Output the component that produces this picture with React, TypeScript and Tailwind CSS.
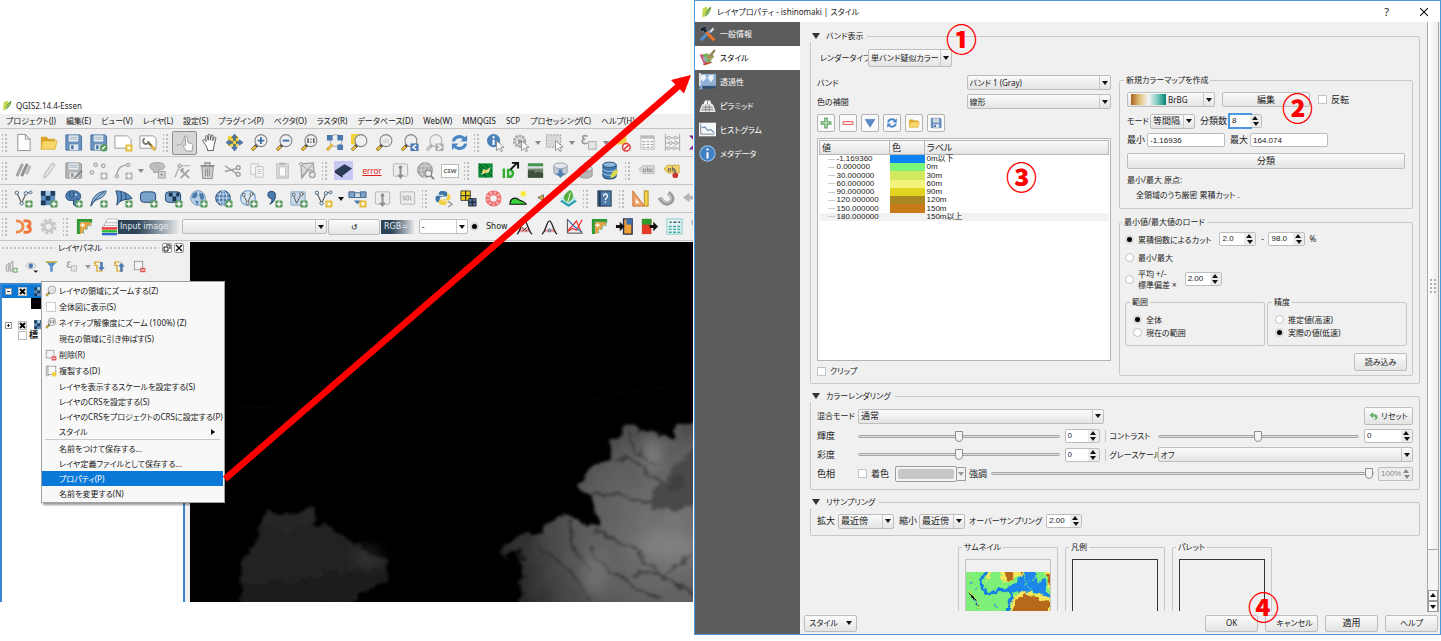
import React from "react";

type Kids = { children?: React.ReactNode };

/* ---------- shared icon pieces (20 x 20 grid) ---------- */

const Svg = ({ children, className = "h-5 w-5" }: Kids & { className?: string }) => (
  <svg viewBox="0 0 20 20" className={`shrink-0 ${className}`} fill="none" aria-hidden="true">
    {children}
  </svg>
);

const Plus = ({ c = "#5b9a5f" }: { c?: string }) => (
  <g>
    <rect x="12" y="12" width="7.5" height="7.5" rx="1.2" fill={c} />
    <path d="M15.75 13.2v5M13.2 15.75h5" stroke="#fff" strokeWidth="1.5" />
  </g>
);

const Star = () => (
  <g>
    <rect x="12" y="12" width="7.5" height="7.5" rx="1.2" fill="#e3b92d" />
    <path d="M15.75 13.2v5M13.2 15.75h5M14 14l3.5 3.5M17.500 14L14 17.500" stroke="#fff" strokeWidth="0.9" />
  </g>
);

const Lens = ({ children, grey }: Kids & { grey?: boolean }) => (
  <g>
    <path d="M7.500 12.500L2 18" stroke={grey ? "#a8a8a8" : "#3c3c3c"} strokeWidth="3.200" />
    <path d="M6 14L2 18" stroke={grey ? "#c8c8c8" : "#e9b93a"} strokeWidth="2.600" />
    <circle cx="11.500" cy="8" r="6.300" fill="#eef0f0" stroke={grey ? "#b4b4b4" : "#858585"} strokeWidth="1.200" />
    {children}
  </g>
);

const Floppy = ({ c = "#6c93c0", d = "#47709e" }: { c?: string; d?: string }) => (
  <g>
    <path d="M2 2h15l1.500 1.500V18H2z" fill={c} stroke={d} />
    <rect x="5" y="2.500" width="10" height="6.500" fill="#e8edf2" />
    <path d="M6 4.500h8M6 6.500h8" stroke="#9fb0c0" />
    <rect x="6" y="12" width="9" height="6" fill="#dfe6ec" />
    <rect x="7.500" y="13" width="2.500" height="4" fill={d} />
  </g>
);

const Checker = () => (
  <g>
    <rect x="2" y="2" width="15" height="15" fill="#5f8fc0" />
    <path d="M2 2h5v5H2zM12 2h5v5h-5zM7 7h5v5H7zM2 12h5v5H2z" fill="#1f3c5c" />
    <path d="M7 2h5v5H7z" fill="#a8c8e8" />
  </g>
);

const Nodes = ({ c = "#4a6a8a" }: { c?: string }) => (
  <g>
    <path d="M3 4l5 11L13 4l4 0" stroke="#555" strokeWidth="1.100" />
    <circle cx="3" cy="4" r="1.800" fill="#e8e8e8" stroke={c} />
    <circle cx="8" cy="15" r="1.800" fill="#e8e8e8" stroke={c} />
    <circle cx="12.500" cy="4.500" r="1.800" fill="#e8e8e8" stroke={c} />
    <circle cx="17.500" cy="3.500" r="1.500" fill="#e8e8e8" stroke={c} />
  </g>
);

const Globe = ({ c = "#4f7fae", l = "#dbe8f4", s = "#2f557c" }: { c?: string; l?: string; s?: string }) => (
  <g>
    <circle cx="9.500" cy="9.500" r="7.800" fill={c} stroke={s} />
    <path d="M1.700 9.500h15.600M9.500 1.700v15.600M3.500 5.300h12M3.500 13.700h12" stroke={l} strokeWidth="0.900" />
    <ellipse cx="9.500" cy="9.500" rx="4" ry="7.800" stroke={l} strokeWidth="0.900" />
  </g>
);

const Refresh = ({ c = "#4a86c4" }: { c?: string }) => (
  <g fill={c}>
    <path d="M2 9C2.500 4.500 6 2.200 10 2.200c2.300 0 4.200.8 5.600 2.200L18 2.200V9h-7l2.400-2.300C12.500 5.800 11.400 5.400 10 5.400 7.600 5.400 5.800 6.800 5.300 9z" />
    <path d="M18 11c-.5 4.500-4 6.800-8 6.800-2.300 0-4.200-.8-5.600-2.200L2 17.800V11h7l-2.400 2.300c.9.900 2 1.300 3.400 1.300 2.400 0 4.200-1.400 4.700-3.600z" />
  </g>
);

const Pointer = ({ c = "#fff" }: { c?: string }) => (
  <path d="M11 8l8 7-3.500.4 1.900 3.300-1.600.9-1.900-3.400L11 18.500z" fill={c} stroke="#777" strokeWidth="0.800" />
);

const Folder = () => (
  <g>
    <path d="M2 4h6l1.500 2H17v11H2z" fill="#d9a62b" />
    <path d="M4 8.500h15L17 17H2z" fill="#f8d76a" stroke="#d9a62b" strokeWidth="0.700" />
  </g>
);

const Box = ({ children }: Kids) => (
  <g>
    <rect x="2.500" y="3" width="15" height="13" rx="1" fill="#ececec" stroke="#b4b4b4" />
    {children}
  </g>
);

const GeoTiles = () => (
  <g>
    <path d="M2 2h16v4H6v12H2z" fill="#2e9a2e" />
    <path d="M5 5h12v4h-4v4H9v4H5z" fill="#e8a33a" />
    <path d="M5 5h12M5 5v12M9 17v-4h4V9h4V5" stroke="#3aa" strokeDasharray="1.500 1.500" />
    <path d="M8 6v5M5.500 8.500h5" stroke="#fff" strokeWidth="1.200" />
  </g>
);

const icons: Record<string, React.ReactNode> = {
  logo: (
    <g>
      <path d="M3 4l7-3 1 6-4 11-5 1z" fill="#c6d64a" />
      <path d="M17 1C12 4 8 9 6 16l2 1C13 13 17 8 17 1z" fill="#5d9b2f" />
      <path d="M4 19L14 6" stroke="#fff" />
    </g>
  ),
  newFile: <path d="M4 1.500h8l5 5v12H4zM12 1.500v5h5" fill="#fff" stroke="#8e8e8e" />,
  open: <Folder />,
  save: <Floppy />,
  saveAs: (
    <g>
      <Floppy />
      <circle cx="15.500" cy="15.500" r="4" fill="#5b9a5f" />
      <path d="M13.800 17.200l3.200-3.200" stroke="#fff" strokeWidth="1.400" />
    </g>
  ),
  newPage: (
    <g>
      <path d="M1 3h13l4 4v9H1z" fill="#fff" stroke="#999" />
      <Star />
    </g>
  ),
  pageTool: (
    <g>
      <path d="M1 3h14l3 3v10H1z" fill="#fff" stroke="#999" />
      <path d="M9 9l8 9" stroke="#7a6a3a" strokeWidth="2.500" />
      <path d="M13 13.500l4 4.500" stroke="#e9b93a" strokeWidth="2.500" />
      <path d="M6 5.500a3.200 3.200 0 104.500 4" stroke="#777" strokeWidth="2" />
    </g>
  ),
  touch: (
    <g>
      <path d="M11 12V5.500c0-2 2.500-2 2.500 0V10l4 1.200c1 .3 1.500 1 1.300 2L18 19h-6l-3.500-5c0-1.500 1.300-1.800 2.500-.500z" fill="#fff" stroke="#999" />
      <path d="M2 13l5-1.500L9 7l2-5" stroke="#888" strokeDasharray="2 1.200" />
    </g>
  ),
  hand: (
    <path
      d="M5.500 12L3 8.500c-.8-1.300.8-2.200 1.700-1.200L6.500 9 6 3.800c-.1-1.500 1.800-1.600 2-.2l.7 4V2.500c0-1.500 2-1.500 2.100 0l.2 5 .8-4.400c.3-1.400 2.100-1.200 2 .2L13.400 8l1.500-3c.6-1.200 2.200-.6 1.800.7L15 12c-.2 3-1 4-1 6.500H8c0-2.500-1.200-4-2.500-6.500z"
      fill="#fff"
      stroke="#555"
    />
  ),
  panAll: (
    <g>
      <rect x="3" y="3" width="11" height="11" fill="#f3d33d" />
      <path d="M10 1l3 4h-2v3h-2V5H7zM10 19l-3-4h2v-3h2v3h2zM1 10l4-3v2h3v2H5v2zM19 10l-4 3v-2h-3V9h3V7z" fill="#4a7ab0" stroke="#2f557c" strokeWidth="0.600" />
    </g>
  ),
  zoomIn: <Lens><path d="M11.500 4.500v7M8 8h7" stroke="#3f6fa5" strokeWidth="2" /></Lens>,
  zoomOut: <Lens><path d="M8 8h7" stroke="#3f6fa5" strokeWidth="2" /></Lens>,
  zoom1: <Lens><path d="M8.500 5.500v5M14.500 5.500v5M11.500 6v1.200M11.500 9v1.200" stroke="#444" strokeWidth="1.400" /></Lens>,
  zoomFull: (
    <g>
      <Lens grey />
      <path d="M2 2h6v6H2zM13 2h6v6h-6zM13 12h6v6h-6z" fill="#4a7ab0" />
      <path d="M2 18l6-6" stroke="#e9b93a" strokeWidth="2.500" />
    </g>
  ),
  zoomSel: (
    <g>
      <rect x="1" y="1" width="11" height="11" fill="#f3d33d" />
      <Lens />
    </g>
  ),
  zoomLayer: <Lens><path d="M8 6h7v5H8z" fill="#dcdcdc" /></Lens>,
  zoomPrev: (
    <g>
      <Lens />
      <rect x="11" y="11" width="8.500" height="8" fill="#4a7ab0" />
      <path d="M17 12.500L13.500 15l3.500 2.500" stroke="#fff" strokeWidth="1.500" />
    </g>
  ),
  zoomNext: (
    <g>
      <Lens grey />
      <rect x="11" y="11" width="8.500" height="8" fill="#b0b0b0" />
      <path d="M13.500 12.500L17 15l-3.500 2.500" stroke="#fff" strokeWidth="1.500" />
    </g>
  ),
  refresh: <Refresh />,
  identify: (
    <g>
      <circle cx="8" cy="8" r="7" fill="#4a80ba" />
      <path d="M8 7v5.500M8 3.500v2" stroke="#fff" strokeWidth="2.200" />
      <Pointer />
    </g>
  ),
  action: (
    <g>
      <circle cx="9" cy="8.500" r="5.500" fill="#ddd" stroke="#aaa" strokeWidth="3" strokeDasharray="2.500 1" />
      <path d="M7.500 6l5 3-5 3z" fill="#999" />
      <Pointer />
    </g>
  ),
  select: (
    <g>
      <rect x="1.500" y="2" width="15" height="13" fill="#d8d8d8" stroke="#999" strokeDasharray="2 1.500" />
      <Pointer />
    </g>
  ),
  epsilon: (
    <g>
      <path d="M9 3.500C5 1.500 2 4 5.500 6.500 1.500 8 3 12.500 9 10.500" stroke="#999" strokeWidth="1.800" />
      <rect x="10" y="9" width="8" height="8" fill="#e4e4e4" stroke="#aaa" />
    </g>
  ),
  deselect: (
    <g>
      <rect x="3" y="3" width="11" height="9" fill="#f3cf45" />
      <circle cx="14" cy="15" r="4" fill="#fff" stroke="#e23b3b" strokeWidth="1.600" />
      <path d="M11.500 17.500l5-5" stroke="#e23b3b" strokeWidth="1.600" />
    </g>
  ),
  tableI: (
    <g>
      <rect x="3" y="3" width="14" height="14" fill="#f8f8f8" stroke="#bbb" />
      <path d="M3 4.500h14" stroke="#bbb" strokeWidth="3" />
      <path d="M4.500 9h3M9 9h3M13.500 9h2.500M4.500 12h3M9 12h3M13.500 12h2.500M4.500 15h3M9 15h3M13.500 15h2.500" stroke="#999" />
    </g>
  ),
  abacus: (
    <g>
      <path d="M2.500 1v18M17.500 1v18M2.500 5h15M2.500 10.500h15M2.500 16h15" stroke="#a5a5a5" />
      <circle cx="6" cy="5" r="1.600" fill="#eee" stroke="#a5a5a5" />
      <circle cx="13" cy="5" r="1.600" fill="#eee" stroke="#a5a5a5" />
      <circle cx="8" cy="10.500" r="1.600" fill="#eee" stroke="#a5a5a5" />
      <circle cx="13.500" cy="10.500" r="1.600" fill="#eee" stroke="#a5a5a5" />
      <circle cx="6" cy="16" r="1.600" fill="#eee" stroke="#a5a5a5" />
      <circle cx="12" cy="16" r="1.600" fill="#eee" stroke="#a5a5a5" />
    </g>
  ),
  sigma: <path d="M15 4H4l6 6-6 6h11" stroke="#7b2a8c" strokeWidth="2.500" />,
  pencils: (
    <g stroke="#a4a4a4" strokeWidth="3">
      <path d="M3 16L9 3" />
      <path d="M8 16l6-13" stroke="#8e8e8e" />
      <path d="M13 14l4-9" stroke="#b8b8b8" />
    </g>
  ),
  pencil: <path d="M5 18l1-4.500L14 2l3 2L9 15.500z" fill="#e2e2e2" stroke="#b0b0b0" />,
  saveEdit: (
    <g>
      <Floppy c="#b4b4b4" d="#939393" />
      <path d="M11 18l8-8" stroke="#888" strokeWidth="2" />
    </g>
  ),
  addPoint: (
    <g>
      <circle cx="3" cy="12" r="2" fill="#ddd" stroke="#999" />
      <circle cx="7" cy="4" r="2" fill="#ddd" stroke="#999" />
      <circle cx="15" cy="5" r="2" fill="#ddd" stroke="#999" />
      <Plus c="#b5b5b5" />
    </g>
  ),
  addCurve: (
    <g>
      <path d="M3 17c0-8 3-13 12-13" stroke="#a5a5a5" strokeWidth="1.400" />
      <circle cx="3" cy="16" r="1.800" fill="#ddd" stroke="#999" />
      <circle cx="15" cy="4" r="1.800" fill="#ddd" stroke="#999" />
      <Plus c="#b5b5b5" />
    </g>
  ),
  addShape: (
    <g>
      <path d="M3 3c3-2 12-2 14 1s-1 5-4 5h-2l1 3H6L5 9C2 9 1 5 3 3z" fill="#bdbdbd" stroke="#a2a2a2" />
      <path d="M11 11h7v7h-7z" fill="#ddd" stroke="#999" />
      <path d="M14.500 12.500v4M12.500 14.500h4" stroke="#999" />
    </g>
  ),
  nodeTool: (
    <g>
      <path d="M2 17L7 5h11" stroke="#aaa" strokeWidth="1.300" />
      <circle cx="7" cy="5" r="1.800" fill="#ddd" stroke="#999" />
      <path d="M8 9l9 9M17 9l-9 9" stroke="#a5a5a5" strokeWidth="2" />
      <path d="M8 11l3-3" stroke="#a5a5a5" strokeWidth="3" />
    </g>
  ),
  trash: (
    <g stroke="#8c8c8c">
      <path d="M4 6h12l-1 12.500H5z" fill="#cfcfcf" />
      <path d="M2.500 5h15M7.500 4V2h5v2" strokeWidth="1.600" />
      <path d="M8 8v8M10 8v8M12 8v8" />
    </g>
  ),
  cut: (
    <g stroke="#a0a0a0" strokeWidth="1.500">
      <path d="M2 5l12 8M2 11l12-3" />
      <circle cx="16" cy="7" r="2" />
      <circle cx="16" cy="14" r="2" />
    </g>
  ),
  copy: (
    <g stroke="#c0c0c0" fill="#f6f6f6">
      <path d="M3 3h8v11H3z" />
      <path d="M8 6h8v11H8z" />
      <path d="M10 9h4M10 11h4M10 13h4" />
    </g>
  ),
  paste: (
    <g stroke="#b5b5b5">
      <rect x="4" y="3" width="12" height="15" fill="#e4e4e4" />
      <rect x="6.500" y="6" width="7" height="10" fill="#fafafa" />
      <path d="M7 3h6" strokeWidth="2.500" />
    </g>
  ),
  polyTool: (
    <g>
      <path d="M3 3l13-1 1 9-6-2-7 9z" fill="#d9d9d9" stroke="#a0a0a0" strokeWidth="1.200" />
      <circle cx="15" cy="14.500" r="3" fill="#eee" stroke="#a5a5a5" strokeWidth="1.500" />
      <circle cx="3" cy="3" r="1.500" fill="#fff" stroke="#999" />
      <path d="M3 17L16 3M4 4l10 9" stroke="#a0a0a0" />
    </g>
  ),
  chip: (
    <g>
      <rect width="20" height="20" fill="#c9c8f4" />
      <path d="M1 10l10-6.500 8 4.500-10 7.500z" fill="#2c3b55" />
      <path d="M1 10v2l8 5.500v-2z" fill="#141c2b" />
    </g>
  ),
  down: (
    <Box>
      <path d="M10 6v10" stroke="#8d8d8d" strokeWidth="2" />
      <path d="M6.500 14.500h7L10 19z" fill="#8d8d8d" />
      <circle cx="10" cy="6.500" r="1.800" fill="#8d8d8d" />
    </Box>
  ),
  globeFind: (
    <g>
      <Globe c="#a9a9a9" l="#dcdcdc" s="#8e8e8e" />
      <circle cx="13" cy="13" r="3.500" fill="#eee" stroke="#888" strokeWidth="1.300" />
      <path d="M15.500 15.500l3.500 3.500" stroke="#888" strokeWidth="2" />
    </g>
  ),
  osgreen: (
    <g>
      <rect x="2.500" y="2.500" width="15" height="15" fill="#0c8d35" />
      <path d="M3 3l14 13M3 10l8 7M9 3l8 8M3 6l8 11" stroke="#0a4d20" />
      <path d="M6 14l2-5 3 1 4-3-2 5-3 0z" fill="#f6c945" stroke="#fff" strokeWidth="0.600" />
    </g>
  ),
  idArrow: (
    <g>
      <path d="M3 8v10M7.500 9.500v7h2c4 0 4-7 0-7z" stroke="#2fae2f" strokeWidth="2.600" />
      <path d="M10 9l7-7M11.500 2H18v6" stroke="#111" strokeWidth="2" />
    </g>
  ),
  scene: (
    <g>
      <rect x="2" y="2.500" width="16" height="15" fill="#6d846d" />
      <path d="M2 4h16" stroke="#3c9a4a" strokeWidth="2.500" />
      <path d="M2 5.500h16v2.500H2z" fill="#d5dde0" />
      <path d="M2 10h7v7.500H2zM9 13l4-2 5 2v4.500H9z" fill="#3f4f3d" />
    </g>
  ),
  dbDown: (
    <g>
      <path d="M3 5v7c0 4 14 4 14 0V5" fill="#c3cbd3" stroke="#93a0ad" />
      <ellipse cx="10" cy="5" rx="7" ry="3" fill="#e3e7ec" stroke="#93a0ad" />
      <path d="M8 9h4v4h3l-5 5-5-5h3z" fill="#4f81b5" />
    </g>
  ),
  dbUp: (
    <g>
      <path d="M3 8v7c0 4 14 4 14 0V8" fill="#b8b8b8" stroke="#999" />
      <ellipse cx="10" cy="8" rx="7" ry="3" fill="#ddd" stroke="#999" />
      <path d="M8 12V6H5l5-5 5 5h-3v6z" fill="#a2a2a2" />
    </g>
  ),
  dbBlue: (
    <g>
      <path d="M2 4v12c0 4 14 4 14 0V4" fill="#3f77ae" stroke="#234c78" />
      <ellipse cx="9" cy="4" rx="7" ry="2.800" fill="#8fb8de" stroke="#234c78" />
      <path d="M2 8c0 4 14 4 14 0M2 12c0 4 14 4 14 0" stroke="#b7d2ea" />
      <path d="M10 18c0-5 3-8 8-9-1 6-3 8-8 9z" fill="#d9d94a" />
    </g>
  ),
  tagGrey: (
    <g>
      <path d="M2 9l4-4h12v8H6z" fill="#dadada" stroke="#b8b8b8" />
      <path d="M6.500 8.500h2.500v2.500H6.500zM11 6.500v4.500h2v-2.500h-2M16.500 8.500h-2v2.500h2" stroke="#888" strokeWidth="0.900" />
    </g>
  ),
  tagYellow: (
    <g>
      <path d="M2 8.500l4-4h12v8H6z" fill="#f5d569" stroke="#c9a63c" />
      <path d="M6.500 8h2.500v2.500H6.500zM11 6v4.500h2V8h-2" stroke="#555" strokeWidth="0.900" />
      <circle cx="14" cy="15" r="3" fill="#c33" />
      <path d="M14 9v4" stroke="#666" strokeWidth="1.500" />
    </g>
  ),
  vectorAdd: <g><Nodes /><Plus /></g>,
  rasterAdd: <g><Checker /><Plus /></g>,
  elephant: (
    <g>
      <path d="M3 4c2-3 10-3 13 0s1 8-1 8l-1-2-1 6c0 2-3 2-3 0v-4H6C2 12 1 7 3 4z" fill="#4c7bb0" stroke="#2a4f7a" />
      <path d="M7 3c-2 2-1 6 1 6s3-4 2-6" stroke="#2a4f7a" />
      <circle cx="12.500" cy="6" r="0.900" fill="#fff" />
      <Plus />
    </g>
  ),
  feather: (
    <g>
      <path d="M2 18C3 9 8 3 18 2c-1 6-6 8-9 9-3 1-5 3-7 7z" fill="#8eb4d8" stroke="#2f557c" />
      <path d="M2 18C6 11 10 7 16 3" stroke="#2f557c" />
      <Plus />
    </g>
  ),
  fan: (
    <g>
      <path d="M2 2c7 0 14 3 17 8l-5 1C9 11 5 13 3 17c1-6 1-10-1-15z" fill="#5f8fc0" stroke="#22466f" />
      <path d="M7 3c1 4 1 7 0 10M12 5c1 3 1 4 0 6" stroke="#22466f" />
      <Plus />
    </g>
  ),
  boxAdd: (
    <g>
      <rect x="1.500" y="3" width="16" height="11" rx="3.500" fill="#7aa3cc" stroke="#22466f" />
      <Plus />
    </g>
  ),
  boxChk: (
    <g>
      <rect x="1.500" y="3" width="16" height="11" rx="3.500" fill="#7aa3cc" stroke="#22466f" />
      <path d="M5 4h4v4H5zM13 4h3v4h-3zM9 8h4v5H9z" fill="#18304c" />
      <Plus />
    </g>
  ),
  globeAdd: (
    <g>
      <circle cx="9.500" cy="9.500" r="7.800" fill="#b3cee6" stroke="#7f9fbe" />
      <path d="M4 5l4-2 1 4-3 3-3-1zM11 4l4 1 1 5-3 2-2-4zM6 12l4 1-1 4z" fill="#4d7aa6" />
      <Plus />
    </g>
  ),
  globeGrid: <g><Globe /><Plus /></g>,
  globeVec: (
    <g>
      <circle cx="9.500" cy="9.500" r="7.800" fill="#d9e7f4" stroke="#7fa5cc" strokeWidth="1.400" />
      <path d="M4 5l5 10 4-10 3 1" stroke="#555" />
      <circle cx="5" cy="6" r="1.500" fill="#fff" stroke="#555" />
      <circle cx="9" cy="14.500" r="1.500" fill="#fff" stroke="#555" />
      <circle cx="13" cy="5.500" r="1.500" fill="#fff" stroke="#555" />
      <Plus />
    </g>
  ),
  comma: (
    <g>
      <path d="M4 6a4 4 0 118 1c0 5-3 8-6 9 2-2 3-4 2-6-2 0-4-1.500-4-4z" fill="#4a7ab0" stroke="#22466f" />
      <Plus />
    </g>
  ),
  virtualAdd: (
    <g>
      <rect x="2" y="3" width="15" height="14" rx="1" fill="#c8d9ea" stroke="#86a4c2" />
      <path d="M4 5l4 10 5-10h3" stroke="#555" />
      <circle cx="5" cy="6" r="1.500" fill="#fff" stroke="#555" />
      <circle cx="13" cy="5.500" r="1.500" fill="#fff" stroke="#555" />
      <Plus />
    </g>
  ),
  vectorNew: <g><Nodes /><Star /></g>,
  satellite: (
    <g>
      <path d="M1 3h6v6H1zM13 3h6v6h-6z" fill="#7ea3c6" stroke="#3f648b" />
      <path d="M7 4h6v5H7z" fill="#d5dde6" stroke="#3f648b" />
      <path d="M6 12h8l-4 4z" fill="#4a7ab0" />
      <Star />
    </g>
  ),
  sql: (
    <Box>
      <path d="M7 7.500H5.200v2h1.600v2H5M8.500 7.500h2.500v4H8.500zM13 7v4.500h2" stroke="#999" strokeWidth="0.800" />
    </Box>
  ),
  python: (
    <g>
      <path d="M9 2c-4 0-4 2-4 4h5v1H3c-2 0-2 7 1 7h2v-3c0-2 1-3 3-3h3c2 0 2-1 2-3 0-2-1-3-5-3z" fill="#3f76a8" />
      <path d="M10 17c4 0 4-2 4-4H9v-1h7c2 0 2-7-1-7h-1v3c0 2-1 3-3 3H8c-2 0-3 1-3 3 0 2 2 3 5 3z" fill="#f4cf48" />
      <path d="M15 13l4 3-4 3" stroke="#999" strokeWidth="1.500" />
    </g>
  ),
  tiles: (
    <g stroke="#222" strokeWidth="0.800">
      <path d="M2 2h5v5H2zM7 2h5v5H7zM2 7h5v5H2zM7 7h5v5H7z" fill="#f1cf1c" />
      <path d="M10 10h4v4h-4zM14 10h4v4h-4zM14 14h4v4h-4zM10 14h4v4h-4z" fill="#4e6da0" />
    </g>
  ),
  donut: (
    <g>
      <circle cx="10" cy="10" r="6" stroke="#ef6b6b" strokeWidth="5" />
      <circle cx="10" cy="10" r="6" stroke="#f8b3b3" strokeWidth="3" strokeDasharray="2 2" />
    </g>
  ),
  hill: (
    <g>
      <path d="M1 16c0-6 5-8 9-5 3 2 7 2 8 5z" fill="#38d338" stroke="#111" strokeWidth="1.200" />
      <circle cx="15" cy="5" r="2.500" fill="#fbe92a" />
      <path d="M15 1v8M11 5h8M12 2l6 6M18 2l-6 6" stroke="#fbe92a" strokeWidth="0.700" />
    </g>
  ),
  horn: <path d="M4 9l6-3v6z" fill="#d9b43c" stroke="#555" strokeWidth="0.800" />,
  layersLeaf: (
    <g>
      <path d="M1 13l9-5 9 5-9 6z" fill="#2d9fb5" />
      <path d="M1 10l9-5 9 5-9 6z" fill="#bfe6ea" />
      <path d="M9 14C3 11 4 5 12 1c5 5 3 11-3 13z" fill="#57ad3e" />
      <path d="M9 14L12 4" stroke="#fff" />
    </g>
  ),
  help: (
    <g>
      <rect x="3" y="2" width="14" height="16" fill="#4f7ba8" stroke="#21374f" />
      <path d="M5 2v16" stroke="#21374f" strokeWidth="2" />
      <path d="M9 7.500c0-3 4-3 4 0 0 2-2 2-2 4M11 13v1.500" stroke="#fff" strokeWidth="1.300" />
    </g>
  ),
  ruler: (
    <g>
      <path d="M2 2l12 16H2z" fill="#f3a46a" stroke="#c76a2c" />
      <path d="M5 10l4 5H5z" fill="#fff" />
      <rect x="14" y="2" width="4" height="16" fill="#f4d24c" stroke="#b18a1e" />
    </g>
  ),
  magnet: (
    <g stroke="#9b9b9b" strokeLinecap="butt">
      <path d="M4 9c2 5 7 8 11 5s2-7-2-10" strokeWidth="4.500" />
      <path d="M5 9c2 4 6 6 9 4s2-5-1-8" stroke="#c8c8c8" strokeWidth="1.500" />
    </g>
  ),
  undo: <path d="M2 9l7-5v3c6 0 9 2 9 8-2-4-5-4-9-4v3z" fill="#b5b5b5" />,
  d3: (
    <g stroke="#f0743a" strokeWidth="3">
      <path d="M2 4c10 0 10 12 0 12" stroke="#f28a4a" />
      <path d="M10 4h3.500c4.500 0 4.500 5.500 0 6 5 .5 5 6 0 6H10" />
    </g>
  ),
  gear: (
    <g>
      <circle cx="10" cy="10" r="7" stroke="#c8c8c8" strokeWidth="3" strokeDasharray="3.500 2" />
      <circle cx="10" cy="10" r="4.500" fill="#eee" stroke="#c8c8c8" strokeWidth="3" />
    </g>
  ),
  geo: <GeoTiles />,
  stack: (
    <g>
      <path d="M2 12L8 2h10v10z" fill="#f8f8f8" stroke="#888" strokeDasharray="1 1" />
      <path d="M4 9h13M6 6h12" stroke="#999" strokeDasharray="2 1" />
      <path d="M2 12h16" stroke="#e33" strokeWidth="2.500" />
      <path d="M2 15h16" stroke="#3b3" strokeWidth="2.500" />
      <path d="M2 18h16" stroke="#36c" strokeWidth="2.500" />
    </g>
  ),
  percent: (
    <g>
      <path d="M4 12h12v4H4z" fill="#f3a0a0" />
      <path d="M2 18C6 16 7 4 10 4s4 12 8 14" stroke="#222" strokeWidth="1.400" />
      <path d="M8 15l4-4M7.500 11.500h1.500M11 14.500h1.500" stroke="#222" />
    </g>
  ),
  sigmaCurve: (
    <g>
      <path d="M4 13h12v3H4z" fill="#f3a0a0" />
      <path d="M2 18C6 16 7 4 10 4s4 12 8 14" stroke="#222" strokeWidth="1.400" />
      <circle cx="10" cy="14" r="1.500" stroke="#27a" />
    </g>
  ),
  plot: (
    <g>
      <path d="M2.500 2v15H19" stroke="#444" />
      <path d="M3 15l5-3 4 2 6-11" stroke="#e22" strokeWidth="1.200" />
      <path d="M3 14L8 9l4-5 5 12" stroke="#e22" strokeWidth="1.200" />
      <path d="M3 3l8 8 7 5" stroke="#36a" strokeWidth="1.200" />
    </g>
  ),
  inBox: (
    <g>
      <path d="M9 2h9v16H9z" fill="#f2a23a" stroke="#22324d" strokeWidth="1.500" />
      <path d="M12 2h6v6h-6z" fill="#3b6fb0" />
      <path d="M1 8.500h4V5l5 5-5 5v-3.500H1z" fill="#111" />
    </g>
  ),
  outBox: (
    <g>
      <path d="M2 2h10v16H2z" fill="#e33a2a" />
      <path d="M2 2h10v6H2z" fill="#2e9a2e" />
      <path d="M10 8.500h4V5l5 5-5 5v-3.500h-4z" fill="#111" />
    </g>
  ),
  calc: (
    <g>
      <rect x="2" y="2" width="16" height="16" fill="#e2f3f2" stroke="#8cc" />
      <path d="M5 5.500h2M9 5.500h3M14 5.500h2" stroke="#456" strokeWidth="1.500" />
      <path d="M4 10h3M8.500 10h3M13 10h3M4 13h3M8.500 13h3M13 13h3M4 16h3M8.500 16h3M13 16h3" stroke="#3aa6a0" strokeWidth="1.500" />
    </g>
  ),
  wrench: (
    <g>
      <path d="M9 9l8 9" stroke="#8aa06a" strokeWidth="4" />
      <path d="M3 3c-3 5 2 9 7 7 4-3 3-8-1-9l1 5-4 2z" fill="#c8c8c8" stroke="#999" />
    </g>
  ),
  addGroup: (
    <g>
      <path d="M2 17V8l4-3v12zM8 17V5l4-3v15z" fill="#e8e8e8" stroke="#888" strokeWidth="1.200" />
      <Plus c="#7cae80" />
    </g>
  ),
  eye: (
    <g>
      <path d="M1 9c4-6 12-6 16 0-4 6-12 6-16 0z" fill="#f2f2f2" stroke="#999" />
      <circle cx="9" cy="9" r="3.500" fill="#4a7ab0" />
      <path d="M13 16h7l-3.500 3.500z" fill="#111" />
    </g>
  ),
  filter: (
    <g>
      <path d="M2 3h16l-6 7v8H8v-8z" fill="#5c92cc" />
      <path d="M1 3h18" stroke="#c9b23a" strokeWidth="2.500" />
    </g>
  ),
  expandT: (
    <g>
      <path d="M3 3h9M6 8v9h9M3 3v5h4" stroke="#d9a62b" strokeWidth="2.500" strokeDasharray="3 1" />
      <path d="M11 3h4v8h3l-5 6-5-6h3z" fill="#4a7ab0" />
    </g>
  ),
  collapseT: (
    <g>
      <path d="M3 3h9M6 8v9h9M3 3v5h4" stroke="#d9a62b" strokeWidth="2.500" strokeDasharray="3 1" />
      <path d="M11 18h4v-8h3l-5-6-5 6h3z" fill="#4a7ab0" />
    </g>
  ),
  removeL: (
    <g>
      <rect x="2" y="2" width="13" height="13" fill="#f4f4f4" stroke="#888" strokeWidth="1.200" />
      <rect x="11" y="12" width="8" height="7" rx="1" fill="#e25555" />
      <path d="M12.500 15.500h5" stroke="#fff" strokeWidth="1.600" />
    </g>
  ),
  dup: (
    <g>
      <path d="M2 2h4v16H2z" fill="#ddd" stroke="#888" />
      <rect x="5" y="2" width="13" height="14" fill="#fafafa" stroke="#888" strokeWidth="1.200" />
      <rect x="12" y="12" width="7" height="7" fill="#f1cf3c" />
    </g>
  ),
  raster: <Checker />,
  tools: (
    <g>
      <path d="M2 18L13 7" stroke="#4f93d8" strokeWidth="3.200" />
      <path d="M12 8l4-5 2 2-4 4z" fill="#d5dbe2" />
      <path d="M8 8l10 10" stroke="#e8742a" strokeWidth="3.400" />
      <path d="M1 6c1-4 5-5 9-4L8 4l2 3-3 3-2-3-3 1z" fill="#20262e" stroke="#8fa0b0" strokeWidth="0.600" />
    </g>
  ),
  palette: (
    <g>
      <path d="M1 7l9-2 5 9-9 4z" fill="#6db64f" />
      <path d="M1 7l3-1 5 11-3 1z" fill="#d8508a" />
      <path d="M4 10l8-2 2 4-8 3z" fill="#8fc9e8" opacity="0.600" />
      <path d="M8 12l6 1 4-4-3-4-5 2z" fill="#a09a5c" />
      <path d="M14 7l4-5" stroke="#8d8455" strokeWidth="2.600" strokeLinecap="round" />
      <path d="M4 18l9-3 3 1-9 3z" fill="#c9463a" />
    </g>
  ),
  transp: (
    <g>
      <rect width="20" height="14" x="0" y="1" fill="#8fb1d8" />
      <path d="M2 3l5-1 2 4-4 4-3-3zM11 3l6-1v5l-3 4-3-4z" fill="#eef3f8" />
      <path d="M1 0v19" stroke="#e8e8e8" strokeWidth="2" />
      <path d="M0 17h20" stroke="#2d4f78" strokeWidth="2.500" />
      <rect x="1" y="15" width="3" height="4" fill="#7da7d8" />
    </g>
  ),
  pyramids: (
    <g>
      <path d="M1 17l3-8h12l3 8z" fill="#e0e0e0" stroke="#fff" />
      <path d="M5 9l2-5h6l2 5z" fill="#f4f4f4" />
      <path d="M4 12h12M3 15h14M8 9v8M12 9v8M10 4v5" stroke="#777" />
    </g>
  ),
  histo: (
    <g>
      <rect y="2" width="20" height="16" fill="#f4f6f8" />
      <path d="M2 3v12.500h16" stroke="#778" />
      <path d="M3 8l4-1 3 4 4-1 4 4" stroke="#6a8ab0" strokeWidth="1.300" />
    </g>
  ),
  info: (
    <g>
      <circle cx="10" cy="10" r="9" fill="#3f7fc4" stroke="#9dc3ea" strokeWidth="1.200" />
      <path d="M10 8.500V16M10 4v2.500" stroke="#fff" strokeWidth="2.400" />
    </g>
  ),
  gPlus: <path d="M8 2h4v6h6v4h-6v6H8v-6H2V8h6z" fill="#d2e8d2" stroke="#5fa565" strokeWidth="2" />,
  rMinus: <rect x="2" y="7.500" width="16" height="5" rx="1" fill="#fbe4e4" stroke="#e86a6a" strokeWidth="2" />,
  triDown: <path d="M2 4h16l-8 13z" fill="#5b8cc4" stroke="#3f6fa9" />,
  reset: <path d="M1 8l7-6v4c7 0 10 3 9 8-1 3-4 4-7 4 4-2 4-7-2-7v4z" fill="#6db36f" />,
};

const Ico = ({ n, className }: { n: string; className?: string }) => <Svg className={className}>{icons[n]}</Svg>;

/* ---------- toolbar parts ---------- */

const Grip = () => (
  <span className="h-5 w-[11px] shrink-0 bg-[radial-gradient(circle,#bdbdbd_1px,transparent_1px)] bg-[length:4px_4px] bg-clip-content px-[2px]" />
);

const Caret = ({ c = "#111" }: { c?: string }) => (
  <svg viewBox="0 0 6 4" className="h-1 w-[6px] shrink-0" aria-hidden="true">
    <path d="M0 0h6L3 4z" fill={c} />
  </svg>
);

const Tool = ({ n, pressed }: { n: string; pressed?: boolean }) => (
  <button
    type="button"
    aria-label={n}
    className={`flex h-6 w-[25px] shrink-0 items-center justify-center rounded-xs ${pressed ? "border border-[#8f8f8f] bg-[#d6d6d6]" : ""}`}
  >
    <Ico n={n} className="h-[19px] w-[19px]" />
  </button>
);

const Bar = ({ children }: Kids) => (
  <div className="flex h-7 items-center overflow-hidden border-b border-[#c4c4c4] bg-[#f0f0f0]">{children}</div>
);

const Tools = ({ list }: { list: string }) => (
  <>
    {list.split(" ").map((n, i) => {
      if (n === "|") return <Grip key={i} />;
      if (n === "v") return <span key={i} className="flex w-[9px] shrink-0 justify-center"><Caret c="#888" /></span>;
      if (n === "V") return <span key={i} className="flex w-[9px] shrink-0 justify-center"><Caret /></span>;
      return <Tool key={i} n={n} pressed={n === "touch"} />;
    })}
  </>
);

/* ---------- form controls ---------- */

const face = "rounded-xs border border-[#bdbdbd] bg-gradient-to-b from-[#fbfbfb] to-[#e4e4e4]";

const Select = ({ label, value, className = "", children }: Kids & { label: string; value: string; className?: string }) => (
  <span className={`relative flex h-[15px] min-w-0 ${className}`}>
    <select aria-label={label} defaultValue={value} className={`h-full w-full appearance-none pr-3 pl-[2px] ${face}`}>
      <option>{value}</option>
    </select>
    {children}
    <span className="pointer-events-none absolute inset-y-px right-px flex w-[11px] items-center justify-center border-l border-[#c8c8c8]">
      <Caret />
    </span>
  </span>
);

const Spin = ({ label, value, className = "", focus, disabled }: { label: string; value: string; className?: string; focus?: boolean; disabled?: boolean }) => (
  <span className={`flex h-[14px] min-w-0 rounded-xs border border-[#bdbdbd] ${disabled ? "bg-[#ededed]" : "bg-white"} ${className}`}>
    <input
      aria-label={label}
      defaultValue={value}
      disabled={disabled}
      className={`w-0 min-w-0 flex-1 pl-[2px] font-['Liberation_Sans','Noto_Sans_CJK_JP',sans-serif] text-[8px] leading-[10px] ${focus ? "outline-2 outline-[#4a98e0]" : ""} ${disabled ? "text-[#8a8a8a]" : ""}`}
    />
    <span className="flex w-[11px] flex-col bg-[#ececec]">
      <button type="button" aria-label={`${label} +`} className="flex flex-1 rotate-180 items-center justify-center"><Caret c={disabled ? "#888" : "#111"} /></button>
      <button type="button" aria-label={`${label} -`} className="flex flex-1 items-center justify-center"><Caret c={disabled ? "#888" : "#111"} /></button>
    </span>
  </span>
);

const Btn = ({ children, className = "" }: Kids & { className?: string }) => (
  <button type="button" className={`flex items-center justify-center ${face} ${className}`}>{children}</button>
);

const Check = ({ label, className = "" }: { label: string; className?: string }) => (
  <label className={`flex items-center gap-1 whitespace-nowrap ${className}`}>
    <input type="checkbox" className="h-[9px] w-[9px] shrink-0 appearance-none border border-[#c4c4c4] bg-white" />
    {label}
  </label>
);

const Radio = ({ name, on, children }: Kids & { name: string; on?: boolean }) => (
  <label className="flex items-center gap-1 leading-[11px] whitespace-nowrap">
    <input
      type="radio"
      name={name}
      defaultChecked={on}
      className="h-[9px] w-[9px] shrink-0 appearance-none rounded-full border border-[#c0c0c0] bg-white checked:border-2 checked:border-[#d8d8d8] checked:bg-black"
    />
    <span>{children}</span>
  </label>
);

const Slider = ({ label, value }: { label: string; value: number }) => (
  <input
    type="range"
    aria-label={label}
    defaultValue={value}
    className="h-[14px] w-full min-w-0 flex-1 appearance-none bg-transparent [&::-webkit-slider-runnable-track]:h-[3px] [&::-webkit-slider-runnable-track]:rounded-full [&::-webkit-slider-runnable-track]:border [&::-webkit-slider-runnable-track]:border-[#a4a4a4] [&::-webkit-slider-runnable-track]:bg-[#e0e0e0] [&::-webkit-slider-thumb]:-mt-[5px] [&::-webkit-slider-thumb]:h-[11px] [&::-webkit-slider-thumb]:w-2 [&::-webkit-slider-thumb]:appearance-none [&::-webkit-slider-thumb]:rounded-t-xs [&::-webkit-slider-thumb]:rounded-b-full [&::-webkit-slider-thumb]:border [&::-webkit-slider-thumb]:border-[#8f8f8f] [&::-webkit-slider-thumb]:bg-[#f4f4f4]"
  />
);

const Group = ({ title, fold, className = "", children }: Kids & { title: string; fold?: boolean; className?: string }) => (
  <fieldset className={`min-w-0 rounded-xs border border-[#c8c8c8] ${className}`}>
    <legend className={`flex h-3 items-center leading-3 ${fold ? "-ml-[9px] gap-[6px] px-1" : "-ml-[3px] px-[2px]"}`}>
      {fold && (
        <svg viewBox="0 0 8 6" className="h-[6px] w-2" aria-hidden="true"><path d="M0 0h8L4 6z" fill="#333" /></svg>
      )}
      {title}
    </legend>
    {children}
  </fieldset>
);

const Mark = ({ n, className }: { n: string; className: string }) => (
  <span className={`pointer-events-none absolute z-20 font-['Noto_Sans_CJK_JP',sans-serif] text-[31px] leading-8 font-black text-[#ff0000] ${className}`}>{n}</span>
);

/* ---------- main window ---------- */

const menus = ["プロジェクト(J)", "編集(E)", "ビュー(V)", "レイヤ(L)", "設定(S)", "プラグイン(P)", "ベクタ(O)", "ラスタ(R)", "データベース(D)", "Web(W)", "MMQGIS", "SCP", "プロセッシング(C)", "ヘルプ(H)"];

const contextItems: { t: string; i?: string; h?: string }[] = [
  { t: "レイヤの領域にズームする(Z)", i: "zoomLayer", h: "h-4" },
  { t: "全体図に表示(S)", i: "box", h: "h-4" },
  { t: "ネイティブ解像度にズーム (100%) (Z)", i: "zoom1", h: "h-4" },
  { t: "現在の領域に引き伸ばす(S)", h: "h-4" },
  { t: "削除(R)", i: "removeL", h: "h-4" },
  { t: "複製する(D)", i: "dup", h: "h-4" },
  { t: "レイヤを表示するスケールを設定する(S)" },
  { t: "レイヤのCRSを設定する(S)" },
  { t: "レイヤのCRSをプロジェクトのCRSに設定する(P)" },
  { t: "スタイル" },
  { t: "-" },
  { t: "名前をつけて保存する..." },
  { t: "レイヤ定義ファイルとして保存する..." },
  { t: "プロパティ(P)" },
  { t: "名前を変更する(N)" },
];

const ContextMenu = () => (
  <div role="menu" className="absolute top-[40px] left-[41px] z-10 min-w-[175px] border border-[#a0a0a0] bg-[#f8f8f8] py-px pr-px shadow-[2px_2px_2px_#0006]">
    {contextItems.map((m, k) =>
      m.t === "-" ? (
        <hr key={k} className="mx-[3px] mb-px border-[#c8c8c8]" />
      ) : (
        <button
          key={k}
          type="button"
          role="menuitem"
          className={`flex w-full items-center whitespace-nowrap ${m.h ?? "h-[15px]"} ${m.t === "プロパティ(P)" ? "bg-[#0a78d7] text-white" : ""}`}
        >
          <span className="flex w-[17px] shrink-0 justify-center">
            {m.i === "box" ? <span className="h-[10px] w-[10px] border border-[#ccc] bg-white" /> : m.i && <Ico n={m.i} className="h-3 w-3" />}
          </span>
          <span className="flex-1 text-left">{m.t}</span>
          {m.t === "スタイル" && (
            <svg viewBox="0 0 4 6" className="mr-[8px] h-[6px] w-1" aria-hidden="true"><path d="M0 0l4 3-4 3z" fill="#111" /></svg>
          )}
        </button>
      ),
    )}
  </div>
);

const XBox = ({ label, on }: { label: string; on?: boolean }) => (
  <span className="relative flex h-[9px] w-[9px] shrink-0">
    <input type="checkbox" aria-label={label} defaultChecked={on} className="h-[9px] w-[9px] appearance-none border border-[#bbb] bg-white" />
    {on && (
      <svg viewBox="0 0 9 9" className="pointer-events-none absolute inset-0" aria-hidden="true"><path d="M2 2l5 5M7 2L2 7" stroke="#000" strokeWidth="2" /></svg>
    )}
  </span>
);

const Fold = ({ open }: { open?: boolean }) => (
  <svg viewBox="0 0 7 7" className="h-[7px] w-[7px] shrink-0" aria-hidden="true">
    <rect x="0.500" y="0.500" width="6" height="6" fill="#fff" stroke="#999" />
    <path d={open ? "M2 3.500h3" : "M2 3.500h3M3.500 2v3"} stroke="#333" />
  </svg>
);

const LayerPanel = () => (
  <section className="flex w-[190px] shrink-0 flex-col bg-[#f0f0f0]">
    <div className="flex h-3 items-center gap-[3px] pr-[6px] pl-px">
      <span className="h-1 flex-1 bg-[radial-gradient(circle,#c4c4c4_1px,transparent_1px)] bg-[length:4px_4px]" />
      <h2 className="leading-3">レイヤパネル</h2>
      <span className="h-1 flex-1 bg-[radial-gradient(circle,#c4c4c4_1px,transparent_1px)] bg-[length:4px_4px]" />
      <button type="button" aria-label="フロート" className="flex h-[10px] w-[10px] items-center justify-center rounded-xs border border-[#999] bg-white">
        <svg viewBox="0 0 8 8" className="h-2 w-2" aria-hidden="true"><path d="M3 1h4v4M1 3h4v4H1z" fill="none" stroke="#111" /></svg>
      </button>
      <button type="button" aria-label="閉じる" className="-ml-px flex h-[10px] w-[10px] items-center justify-center rounded-xs border border-[#999] bg-white">
        <svg viewBox="0 0 8 8" className="h-2 w-2" aria-hidden="true"><path d="M1 1l6 6M7 1L1 7" stroke="#111" strokeWidth="1.500" /></svg>
      </button>
    </div>
    <div className="flex h-[29px] items-start pt-[6px] pl-[5px]">
      {["addGroup", "eye", "filter", "epsilon", "v", "expandT", "collapseT", "removeL"].map((n) =>
        n === "v" ? (
          <span key={n} className="flex h-[13px] w-2 items-center"><Caret c="#999" /></span>
        ) : (
          <button key={n} type="button" aria-label={n} className="flex w-5 justify-start"><Ico n={n} className="h-[13px] w-[13px]" /></button>
        ),
      )}
    </div>
    <div className="mr-[5px] flex-1 border-2 border-b-0 border-[#3a87cf] bg-white">
      <div className="flex h-[13px] items-center gap-[6px] bg-[#0a78d7] pl-[3px]">
        <Fold open />
        <XBox label="ishinomaki" on />
        <Ico n="raster" className="h-3 w-3" />
      </div>
      <div className="flex h-[22px] flex-col pl-[29px]">
        <span className="h-[11px] w-5 bg-black" />
      </div>
      <div className="flex h-[10px] items-center gap-[6px] pl-[3px]">
        <Fold />
        <XBox label="raster" on />
        <Ico n="raster" className="h-3 w-3" />
      </div>
      <div className="flex h-[10px] items-center gap-[2px] pl-4 text-[9px] leading-[10px]">
        <XBox label="標準地図" />
        <span className="font-bold">標</span>
      </div>
    </div>
  </section>
);

const MapView = () => (
  <div className="relative min-w-0 flex-1 overflow-hidden bg-black">
    <svg viewBox="0 0 503 359" preserveAspectRatio="xMaxYMax slice" className="absolute inset-0 h-full w-full" aria-hidden="true">
      <defs>
        <filter id="rough" x="-5%" y="-5%" width="110%" height="110%">
          <feTurbulence type="fractalNoise" baseFrequency="0.060" numOctaves="3" seed="4" result="n" />
          <feDisplacementMap in="SourceGraphic" in2="n" scale="18" xChannelSelector="R" yChannelSelector="G" />
          <feGaussianBlur stdDeviation="1.400" />
        </filter>
        <filter id="soft"><feGaussianBlur stdDeviation="7" /></filter>
        <radialGradient id="hillA" gradientUnits="userSpaceOnUse" cx="480" cy="290" r="170">
          <stop offset="0" stopColor="#787878" />
          <stop offset="0.550" stopColor="#595959" />
          <stop offset="1" stopColor="#222" />
        </radialGradient>
        <linearGradient id="hillB" x1="0" y1="0" x2="0.200" y2="1">
          <stop offset="0" stopColor="#262626" />
          <stop offset="0.600" stopColor="#222" />
          <stop offset="1" stopColor="#181818" />
        </linearGradient>
      </defs>
      <g stroke="#070707" fill="none">
        <path d="M300 160l34 28c30-25 80-38 150-44" />
        <path d="M30 170c20-10 40 0 60-8" />
      </g>
      <g filter="url(#rough)">
        <path d="M53 375V330l15-33 12-27h27l15-6 5 16 20 9 20 14 30 12 3 25-33 14v21z" fill="url(#hillB)" />
        <path
          d="M520 176l-33 7-7 14-20-9-23-5-19 15 8 15-20 10-17 15 12 20 6 27-36-12-15 15-24-1-24 25 7 5 18-12v43l-8 24h190z"
          fill="url(#hillA)"
        />
        <g stroke="#2a2a2a" strokeWidth="3" fill="none" opacity="0.700">
          <path d="M503 350c-40-20-60-50-100-60M430 215c20 5 30 20 50 30M400 255c30-8 50 0 70 12M350 310c25 5 40 25 45 49M470 359c-20-20-60-30-70-55M503 310c-20 10-30 25-60 20M380 280c-2 25 10 40 20 50M440 190c4 16 14 28 26 34" />
        </g>
        <path d="M465 245l20-22 25-18v52l-27 12-20-4z" fill="#4a4a4a" />
        <path d="M475 240c8-10 18-8 20 2s-18 12-20-2z" fill="#404040" />
      </g>
      <g filter="url(#soft)" opacity="0.500">
        <ellipse cx="463" cy="212" rx="8" ry="16" fill="#a0a0a0" />
        <ellipse cx="478" cy="305" rx="34" ry="14" fill="#8c8c8c" />
        <ellipse cx="405" cy="330" rx="14" ry="22" fill="#808080" />
        <ellipse cx="178" cy="314" rx="14" ry="10" fill="#444" />
      </g>
    </svg>
  </div>
);

const MainWindow = () => (
  <main className="flex min-w-0 flex-col overflow-hidden pt-[97px] pr-px pb-[39px] text-[8px]">
    <div className="flex h-[17px] items-center gap-[3px] pl-[2px]">
      <Ico n="logo" className="h-[11px] w-[11px]" />
      <h1 className="leading-3">QGIS2.14.4-Essen</h1>
    </div>
    <nav className="flex h-[15px] items-center gap-[10px] overflow-hidden border-b border-[#c4c4c4] bg-[#f0f0f0] pl-[6px]">
      {menus.map((m) => (
        <button key={m} type="button" className="shrink-0 leading-3 whitespace-nowrap">{m}</button>
      ))}
    </nav>
    <Bar>
      <Tools list="| newFile open save saveAs newPage pageTool | touch hand panAll zoomIn zoomOut zoom1 zoomFull zoomSel zoomLayer zoomPrev zoomNext refresh | identify action v select v epsilon v deselect tableI abacus sigma" />
    </Bar>
    <Bar>
      <Tools list="| pencils pencil saveEdit addPoint addCurve v addShape nodeTool trash cut copy paste polyTool | chip" />
      <a href="#error" className="w-8 shrink-0 text-center text-[8px] text-[#e02020] underline">error</a>
      <Tools list="down globeFind" />
      <button type="button" className="mx-[3px] h-[14px] w-[18px] shrink-0 border border-[#bbb] bg-white text-[6px] leading-3 font-bold text-[#666]">CSW</button>
      <Tools list="| osgreen idArrow scene dbDown dbUp dbBlue | tagGrey tagYellow" />
    </Bar>
    <Bar>
      <Tools list="| vectorAdd rasterAdd elephant feather fan boxAdd boxChk globeAdd globeGrid globeVec comma virtualAdd vectorNew V satellite down sql | python tiles donut hill horn layersLeaf | help | ruler magnet undo" />
    </Bar>
    <Bar>
      <Tools list="| d3 gear | geo stack" />
      <span className="-ml-1 h-[14px] w-[62px] shrink-0 bg-gradient-to-r from-[#2c4358] from-30% to-[#f0f0f0] pl-[2px] font-['DejaVu_Sans',sans-serif] text-[8px] leading-[14px] whitespace-nowrap text-[#e6ecf2]">Input image</span>
      <Select label="Input image" value="" className="ml-[2px] w-[145px] shrink-0" />
      <Btn className="ml-px h-4 w-[52px] shrink-0">↺</Btn>
      <span className="ml-px h-[14px] w-[34px] shrink-0 bg-gradient-to-r from-[#2c4358] from-30% to-[#f0f0f0] pl-[3px] font-['DejaVu_Sans',sans-serif] text-[8px] leading-[14px] text-[#e6ecf2]">RGB=</span>
      <Select label="RGB" value="-" className="ml-1 w-[49px] shrink-0 [&>select]:bg-white [&>select]:bg-none" />
      <label className="mr-1 ml-[2px] flex shrink-0 items-center gap-[7px] font-['DejaVu_Sans',sans-serif]">
        <input type="radio" defaultChecked className="h-[9px] w-[9px] appearance-none rounded-full border-2 border-[#d8d8d8] bg-black" />
        Show
      </label>
      <Tools list="percent sigmaCurve plot geo inBox outBox calc wrench" />
    </Bar>
    <div className="relative flex flex-1 bg-[#f0f0f0] pt-px">
      <LayerPanel />
      <MapView />
      <ContextMenu />
    </div>
  </main>
);

/* ---------- layer properties dialog ---------- */

const sections = [
  ["tools", "一般情報"],
  ["palette", "スタイル"],
  ["transp", "透過性"],
  ["pyramids", "ピラミッド"],
  ["histo", "ヒストグラム"],
  ["info", "メタデータ"],
];

const rows = [
  ["-1.169360", "bg-[#0a84f5]", "0m以下"],
  ["0.000000", "bg-[#7af57a]", "0m"],
  ["30.000000", "bg-[#d3ea5e]", "30m"],
  ["60.000000", "bg-[#f2f27c]", "60m"],
  ["90.000000", "bg-[#e3d321]", "90m"],
  ["120.000000", "bg-[#a98722]", "120m"],
  ["150.000000", "bg-[#cb7a18]", "150m"],
  ["180.000000", "", "150m以上"],
];

const ColorTable = () => (
  <div className="relative mt-[6px] h-[223px] border border-[#b4b4b4] bg-white p-px font-['Liberation_Sans','Noto_Sans_CJK_JP',sans-serif]">
    <table className="h-[81px] w-full table-fixed border-collapse text-left text-[8px] leading-[8px]">
      <colgroup>
        <col className="w-[70px]" />
        <col className="w-[35px]" />
        <col />
      </colgroup>
      <thead>
        <tr className="h-[14px] bg-gradient-to-b from-[#fafafa] to-[#e2e2e2] text-[9px]">
          {["値", "色", "ラベル"].map((h) => (
            <th key={h} className="border border-[#b8b8b8] px-[2px] py-0 font-normal">{h}</th>
          ))}
        </tr>
      </thead>
      <tbody>
        {rows.map(([v, c, l]) => (
          <tr key={v} className={c ? "" : "bg-[#f2f2f2]"}>
            <td className="p-0">
              <span className="flex h-2 items-center gap-[2px] pl-2">
                <span className="h-full w-[7px] bg-[linear-gradient(#ccc,#ccc)] bg-[length:7px_1px] bg-center bg-no-repeat" />
                {v}
              </span>
            </td>
            <td className={`p-0 ${c}`} />
            <td className="py-0 pr-0 pl-[2px] whitespace-nowrap">{l}</td>
          </tr>
        ))}
      </tbody>
    </table>
    <Mark n="③" className="top-[21px] left-[188px]" />
  </div>
);

const Thumbnail = () => (
  <svg viewBox="0 0 83 39" preserveAspectRatio="none" className="h-[39px] w-full" aria-hidden="true">
    <defs>
      <filter id="terrain" x="0" y="0" width="100%" height="100%">
        <feTurbulence type="fractalNoise" baseFrequency="0.220" numOctaves="2" seed="8" result="t" />
        <feDisplacementMap in="SourceGraphic" in2="t" scale="6" xChannelSelector="R" yChannelSelector="G" />
        <feGaussianBlur stdDeviation="0.400" />
      </filter>
    </defs>
    <rect width="83" height="39" fill="#7df07a" />
    <g filter="url(#terrain)">
      <path d="M58 -3h14l-4 6 4 8 6-6 1 14 6 6-10 3-10-6-8 2-6-6-8 4-5-4 12-8z" fill="#1a86ea" />
      <path d="M20 -3h6l-6 14zM33 -3h26l-5 7-8 4-9 4zM76 -3h10v24l-6-5 2-8zM46 26l10-7 16 2 14 6v15H43z" fill="#f3e75a" />
      <path d="M38 -3h9l-1 11-6 1zM53 -3h4l-2 5zM49 28l9-6 12 3 6 5 6-1v13H45zM80 2h6v12l-5-3z" fill="#b8681a" />
      <path d="M2 -3c2 4 0 8 3 10M2 20c8 2 8 10 12 18" stroke="#b5e86a" strokeWidth="1.500" />
      <path d="M21 -3c-2 7-7 7-6 14s6 14 12 9 20-2 18 6-4 6-3 14" stroke="#147fe6" strokeWidth="3" fill="none" />
      <path d="M56 -2l3 14 10 12M59 12l14-8" stroke="#7df07a" strokeWidth="0.800" fill="none" />
      <path d="M7 28l4 3M4 10l3 3M28 32l3 4M9 16l2 1" stroke="#3f9ae0" strokeWidth="1.500" />
    </g>
  </svg>
);

const ColormapGroup = () => (
  <Group title="新規カラーマップを作成" className="px-[7px] pb-[7px]">
    <div className="mt-[6px] flex h-[15px] items-stretch">
      <Select label="カラーランプ" value="BrBG" className="w-[88px] [&>select]:pl-10">
        <span className="pointer-events-none absolute top-[2px] left-1 h-[11px] w-[35px] bg-[linear-gradient(90deg,#a8641e,#dfc27d,#f5f5f5,#80cdc1,#018571)]" />
      </Select>
      <Btn className="ml-[7px] w-[88px] text-[9px]">編集</Btn>
      <Check label="反転" className="ml-2 text-[9px]" />
    </div>
    <div className="mt-[7px] flex h-[14px] items-center">
      <span className="w-[23px] whitespace-nowrap">モード</span>
      <Select label="モード" value="等間隔" className="w-[45px] text-[9px]" />
      <span className="mx-[3px] w-7 pl-[2px] text-[9px] whitespace-nowrap">分類数</span>
      <Spin label="分類数" value="8" focus className="w-[33px]" />
    </div>
    <div className="mt-[5px] flex h-[14px] items-center text-[9px]">
      <label htmlFor="vmin" className="w-[20px] whitespace-nowrap">最小</label>
      <input id="vmin" defaultValue="-1.16936" className="h-[14px] w-[78px] rounded-xs border border-[#bdbdbd] bg-white pl-[2px] font-['Liberation_Sans',sans-serif] text-[8px]" />
      <label htmlFor="vmax" className="ml-[5px] w-[20px] whitespace-nowrap">最大</label>
      <input id="vmax" defaultValue="164.074" className="h-[14px] w-[78px] rounded-xs border border-[#bdbdbd] bg-white pl-[2px] font-['Liberation_Sans',sans-serif] text-[8px]" />
    </div>
    <Btn className="mt-[6px] h-4 w-full text-[9px]">分類</Btn>
    <p className="mt-[5px]">最小/最大 原点:</p>
    <p className="mt-[3px] pl-[9px]">全領域のうち厳密 累積カット .</p>
  </Group>
);

const LoadGroup = () => (
  <Group title="最小値/最大値のロード" className="mt-[7px] px-[5px] pb-1">
    <div className="mt-1 flex h-[14px] items-center">
      <Radio name="load" on>累積個数によるカット</Radio>
      <Spin label="下限" value="2.0" className="ml-2 w-[37px]" />
      <span className="w-3 text-center">-</span>
      <Spin label="上限" value="98.0" className="w-[37px]" />
      <span className="ml-1">%</span>
    </div>
    <div className="mt-[5px] flex h-3 items-center">
      <Radio name="load">最小/最大</Radio>
    </div>
    <div className="mt-[5px] flex h-[22px] items-center">
      <Radio name="load">平均 +/-<br />標準偏差 ×</Radio>
      <Spin label="標準偏差" value="2.00" className="ml-2 w-[37px]" />
    </div>
    <div className="mt-[6px] grid grid-cols-2 gap-[2px]">
      <Group title="範囲" className="px-[7px] pb-[7px]">
        <div className="mt-[6px] flex flex-col gap-[2px]">
          <Radio name="extent" on>全体</Radio>
          <Radio name="extent">現在の範囲</Radio>
        </div>
      </Group>
      <Group title="精度" className="px-[7px] pb-[7px]">
        <div className="mt-[6px] flex flex-col gap-[2px]">
          <Radio name="accuracy">推定値(高速)</Radio>
          <Radio name="accuracy" on>実際の値(低速)</Radio>
        </div>
      </Group>
    </div>
    <div className="mt-[7px] flex justify-end">
      <Btn className="h-[18px] w-[53px]">読み込み</Btn>
    </div>
  </Group>
);

const BandGroup = () => (
  <Group title="バンド表示" fold className="px-[6px] pb-[6px]">
    <div className="mt-[7px] flex h-[18px] items-center pl-[3px]">
      <span className="w-12 whitespace-nowrap">レンダータイプ</span>
      <Select label="レンダータイプ" value="単バンド疑似カラー" className="h-[18px] w-[84px]" />
    </div>
    <div className="mt-[7px] grid grid-cols-2 gap-x-2">
      <div className="pt-px">
        <div className="grid grid-cols-2 items-center gap-x-[5px] gap-y-1">
          <span>バンド</span>
          <Select label="バンド" value="バンド 1 (Gray)" />
          <span>色の補間</span>
          <Select label="色の補間" value="線形" />
        </div>
        <div className="mt-[5px] flex gap-1">
          {["gPlus", "rMinus", "triDown", "refresh", "open", "save"].map((n) => (
            <button key={n} type="button" aria-label={n} className="flex h-[18px] w-[18px] items-center justify-center rounded-xs border border-[#b4b4b4] bg-[#fafafa]">
              <Ico n={n} className="h-3 w-3" />
            </button>
          ))}
        </div>
        <ColorTable />
        <Check label="クリップ" className="mt-1 h-3" />
      </div>
      <div>
        <ColormapGroup />
        <LoadGroup />
      </div>
    </div>
  </Group>
);

const ColorGroup = () => (
  <Group title="カラーレンダリング" fold className="mt-[6px] px-[6px] pb-[7px]">
    <div className="mt-[5px] flex h-[18px] items-center">
      <span className="w-[41px] shrink-0 whitespace-nowrap">混合モード</span>
      <Select label="混合モード" value="通常" className="flex-[246] text-[9px]" />
      <span className="flex-[260]" />
      <Btn className="h-[18px] w-[49px] shrink-0 gap-[2px]"><Ico n="reset" className="h-[10px] w-[10px]" />リセット</Btn>
    </div>
    <div className="mt-1 grid grid-cols-[36px_1fr_35px_48px_1fr_49px] items-center gap-x-[5px] gap-y-1">
      <span className="text-[9px]">輝度</span>
      <Slider label="輝度" value={50} />
      <Spin label="輝度の値" value="0" />
      <span className="border-l border-[#c4c4c4] pl-1 whitespace-nowrap">コントラスト</span>
      <Slider label="コントラスト" value={50} />
      <Spin label="コントラストの値" value="0" />
      <span className="text-[9px]">彩度</span>
      <Slider label="彩度" value={50} />
      <Spin label="彩度の値" value="0" />
      <span className="border-l border-[#c4c4c4] pl-1 whitespace-nowrap">グレースケール</span>
      <Select label="グレースケール" value="オフ" className="col-span-2" />
    </div>
    <div className="mt-[3px] flex h-[17px] items-center text-[9px]">
      <span className="w-[41px] shrink-0">色相</span>
      <Check label="着色" className="w-[37px] shrink-0" />
      <button type="button" aria-label="色" className="h-4 w-[62px] shrink-0 rounded-xs border border-[#9c9c9c] bg-[#f4f4f4] p-[2px]">
        <span className="block h-full rounded-xs bg-[#c6c6c6]" />
      </button>
      <button type="button" aria-label="色メニュー" className="flex h-[14px] w-[9px] shrink-0 items-center justify-center border border-l-0 border-[#9c9c9c]"><Caret c="#999" /></button>
      <span className="mx-[3px] w-[19px] shrink-0 whitespace-nowrap">強調</span>
      <Slider label="強調" value={100} />
      <Spin label="強調の値" value="100%" disabled className="ml-1 w-[35px] shrink-0" />
    </div>
  </Group>
);

const ResampleGroup = () => (
  <Group title="リサンプリング" fold className="mt-[6px] px-[6px] pb-[7px]">
    <div className="mt-[6px] flex h-[14px] items-center text-[9px]">
      <span className="w-[21px]">拡大</span>
      <Select label="拡大" value="最近傍" className="w-[56px]" />
      <span className="ml-[5px] w-[20px]">縮小</span>
      <Select label="縮小" value="最近傍" className="w-[46px]" />
      <span className="mx-1 min-w-[65px] text-[8px] whitespace-nowrap">オーバーサンプリング</span>
      <Spin label="オーバーサンプリング" value="2.00" className="w-[36px]" />
    </div>
  </Group>
);

const Dialog = () => (
  <section className="mb-[6px] flex min-w-0 flex-col border border-[#4a98d8] bg-white text-[8px] leading-3">
    <header className="flex h-[21px] items-center gap-1 bg-white pr-3 pl-[6px]">
      <Ico n="logo" className="h-3 w-3" />
      <h2 className="flex-1">レイヤプロパティ - ishinomaki | スタイル</h2>
      <button type="button" aria-label="ヘルプ" className="mr-[27px] text-[11px]">?</button>
      <button type="button" aria-label="閉じる">
        <svg viewBox="0 0 8 8" className="h-2 w-2" aria-hidden="true"><path d="M0 0l8 8M8 0L0 8" stroke="#111" strokeWidth="1.100" /></svg>
      </button>
    </header>
    <div className="flex flex-1">
      <nav className="flex w-[105px] shrink-0 flex-col bg-[#5c5c5c] text-white">
        {sections.map(([i, t]) => (
          <button
            key={t}
            type="button"
            className={`flex h-6 items-center gap-1 pb-px pl-1 text-left ${t === "スタイル" ? "bg-white text-black" : ""}`}
          >
            <Ico n={i} className="h-[17px] w-[17px]" />
            {t}
          </button>
        ))}
      </nav>
      <div className="flex min-w-0 flex-1 flex-col bg-[#f0f0f0]">
        <div className="flex flex-1">
          <div className="min-w-0 flex-1 pt-2 pr-[7px] pl-[10px]">
            <BandGroup />
            <ColorGroup />
            <ResampleGroup />
            <div className="mt-[5px] flex justify-center gap-[7px]">
              <Group title="サムネイル" className="w-[100px] rounded-b-none border-b-0 px-[6px]">
                <div className="mt-[6px] h-[52px] border border-b-0 border-[#c4c4c4] pt-3"><Thumbnail /></div>
              </Group>
              <Group title="凡例" className="w-[100px] rounded-b-none border-b-0 px-[6px]">
                <div className="mt-[6px] h-[52px] border border-b-0 border-[#333]" />
              </Group>
              <Group title="パレット" className="w-[100px] rounded-b-none border-b-0 px-[6px]">
                <div className="mt-[6px] h-[52px] border border-b-0 border-[#333]" />
              </Group>
            </div>
          </div>
          <div className="mr-px flex w-3 flex-col border-x border-[#a8a8a8] bg-[#e0e0e0]">
            <div className="flex h-[528px] items-center justify-center border-b border-[#a8a8a8] bg-gradient-to-r from-white to-[#ededed]">
              <span className="h-4 w-2 bg-[radial-gradient(circle,#b0b0b0_1px,transparent_1px)] bg-[length:4px_4px]" />
            </div>
            <span className="flex-1 bg-[#f4f4f4]" />
            <button type="button" aria-label="上へ" className="flex h-[11px] rotate-180 items-center justify-center border border-[#999] bg-white"><Caret /></button>
            <button type="button" aria-label="下へ" className="flex h-[11px] items-center justify-center border border-[#999] bg-white"><Caret /></button>
          </div>
        </div>
        <footer className="flex h-[22px] items-center pr-[2px] pl-1">
          <Btn className="h-[17px] w-[53px] gap-2">スタイル <Caret /></Btn>
          <span className="flex-1" />
          <div className="relative flex gap-[7px]">
            <Btn className="h-[17px] w-[53px] border-[#777]">OK</Btn>
            <Btn className="h-[17px] w-[53px] pl-[6px]">キャンセル</Btn>
            <Btn className="h-[17px] w-[53px] text-[9px]">適用</Btn>
            <Btn className="h-[17px] w-[53px]">ヘルプ</Btn>
            <Mark n="④" className="-top-[25px] left-[43px]" />
          </div>
        </footer>
      </div>
    </div>
  </section>
);

export default function App() {
  return (
    <div
      lang="ja"
      className="relative grid min-h-screen grid-cols-[694fr_747fr] overflow-hidden bg-white font-['Noto_Sans','Noto_Sans_CJK_JP',sans-serif] text-[#1a1a1a] [font-feature-settings:'palt']"
    >
      <MainWindow />
      <Dialog />
      <svg viewBox="0 0 1441 641" preserveAspectRatio="none" className="pointer-events-none absolute inset-0 z-20 h-full w-full" aria-hidden="true">
        <path d="M225 479L681 84" stroke="#ff0000" strokeWidth="6.500" />
        <path d="M691 75l-7 18.500L671 80z" fill="#ff0000" />
      </svg>
      <Mark n="①" className="top-[22px] left-[946px]" />
      <Mark n="②" className="top-[91px] left-[1282px]" />
    </div>
  );
}
